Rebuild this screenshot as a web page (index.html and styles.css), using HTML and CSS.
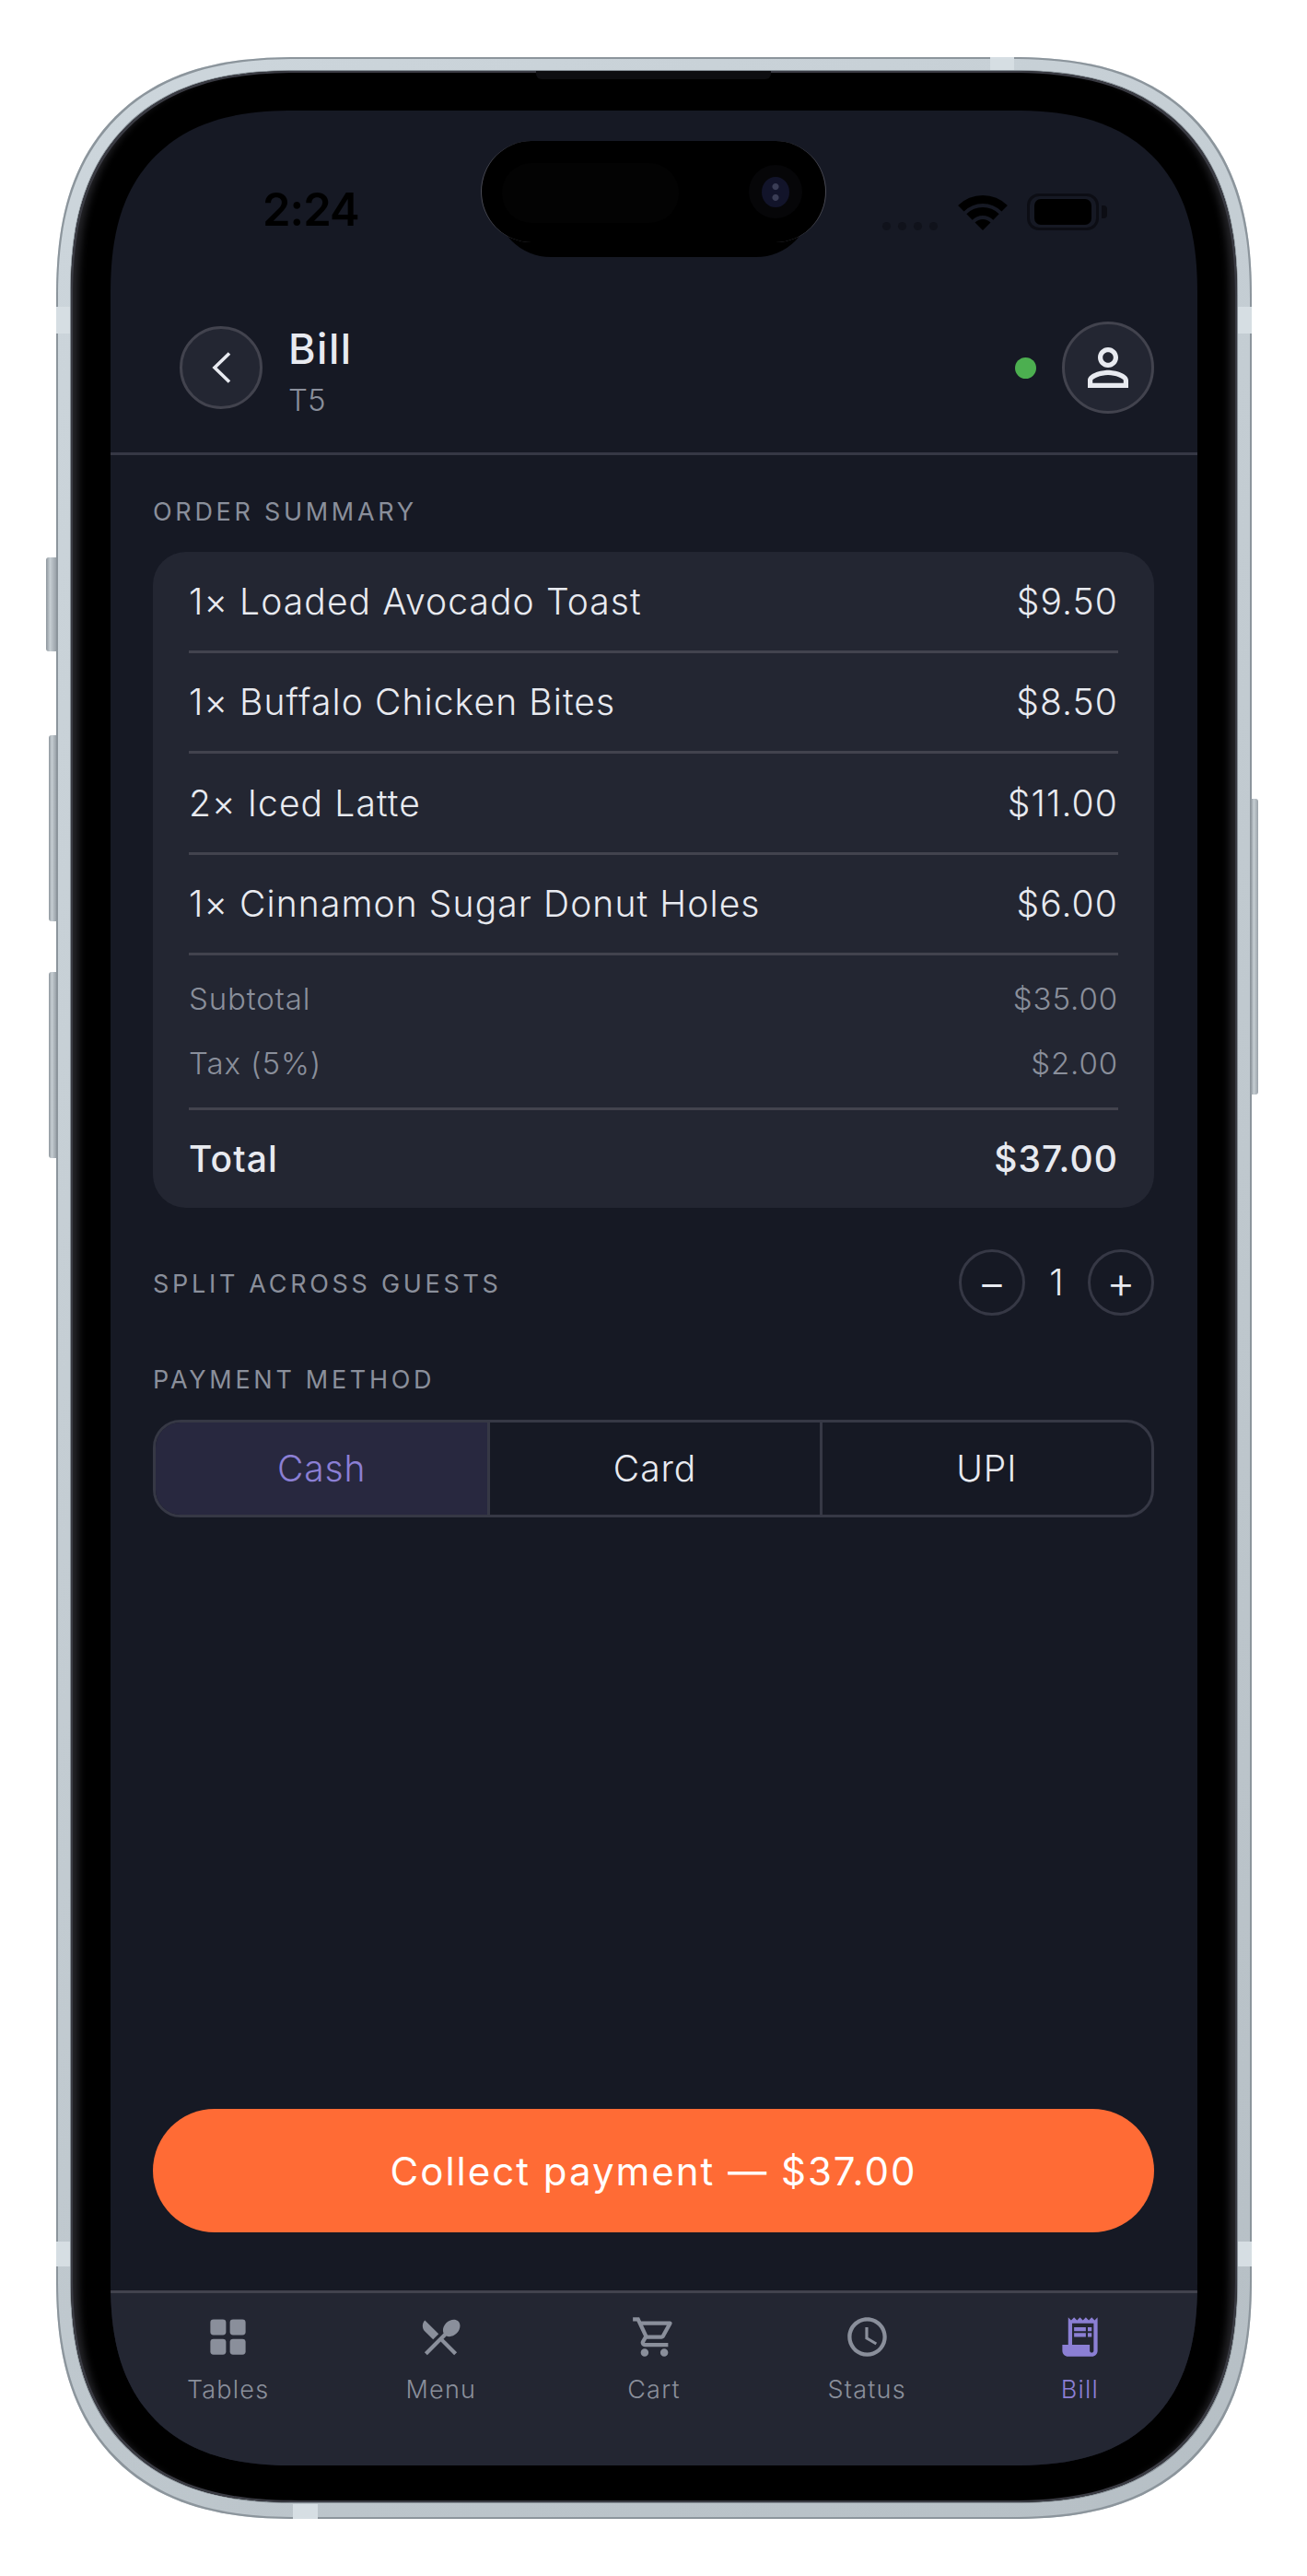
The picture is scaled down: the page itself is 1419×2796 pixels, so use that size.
FILE: index.html

```html
<!DOCTYPE html>
<html lang="en">
<head>
    <meta charset="UTF-8">
    <meta name="viewport" content="width=device-width, initial-scale=1.0">
    <title>Bill - T5</title>
    <link rel="stylesheet" href="styles.css">
</head>
<body>

    <div class="phone">
        <span class="side-btn side-mute"></span>
        <span class="side-btn side-up"></span>
        <span class="side-btn side-down"></span>
        <span class="side-btn side-power"></span>
        <span class="band band-top"></span>
        <span class="band band-bottom"></span>
        <span class="band band-left-a"></span>
        <span class="band band-left-b"></span>
        <span class="band band-right-a"></span>
        <span class="band band-right-b"></span>

        <div class="bezel">
            <span class="speaker"></span>

            <div class="screen">
                <div class="island-back"></div>
                <div class="island">
                    <span class="island-sensor"></span>
                    <span class="island-camera"><span class="island-lens"></span></span>
                </div>

                <div class="status-bar">
                    <span class="status-time">2:24</span>
                    <div class="status-icons">
                        <div class="signal"><i></i><i></i><i></i><i></i></div>
                        <svg class="wifi" viewBox="0 0 54 39">
                            <path d="M0.1 12.1A38 38 0 0 1 53.9 12.1L47.5 18.5A29 29 0 0 0 6.5 18.5Z"/>
                            <path d="M9.3 21.3A25 25 0 0 1 44.7 21.3L38.3 27.7A16 16 0 0 0 15.7 27.7Z"/>
                            <path d="M18.5 30.5A12 12 0 0 1 35.5 30.5L27 39Z"/>
                        </svg>
                        <div class="battery">
                            <div class="battery-body"><div class="battery-fill"></div></div>
                            <div class="battery-nub"></div>
                        </div>
                    </div>
                </div>

                <header class="header">
                    <button class="back-btn" aria-label="Back">
                        <svg viewBox="0 0 24 36" width="24" height="36">
                            <polyline points="21,2.5 5,18 21,33.5" fill="none" stroke="#e8eaf0" stroke-width="3.6"/>
                        </svg>
                    </button>
                    <div class="title-block">
                        <div class="title">Bill</div>
                        <div class="subtitle">T5</div>
                    </div>
                    <span class="online-dot"></span>
                    <button class="avatar-btn" aria-label="Profile">
                        <svg viewBox="0 0 24 24" width="66" height="66" fill="#e8eaf0">
                            <path d="M12 5.9c1.16 0 2.1.94 2.1 2.1s-.94 2.1-2.1 2.1S9.9 9.16 9.9 8s.94-2.1 2.1-2.1m0 9c2.97 0 6.1 1.46 6.1 2.1v1.1H5.9V17c0-.64 3.13-2.1 6.1-2.1M12 4C9.79 4 8 5.79 8 8s1.79 4 4 4 4-1.79 4-4-1.79-4-4-4zm0 9c-2.67 0-8 1.34-8 4v3h16v-3c0-2.66-5.33-4-8-4z"/>
                        </svg>
                    </button>
                </header>

                <main class="content">
                    <div class="section-label summary-label">ORDER SUMMARY</div>

                    <div class="card">
                        <div class="item-row"><span>1× Loaded Avocado Toast</span><span>$9.50</span></div>
                        <div class="item-row"><span>1× Buffalo Chicken Bites</span><span>$8.50</span></div>
                        <div class="item-row"><span>2× Iced Latte</span><span>$11.00</span></div>
                        <div class="item-row"><span>1× Cinnamon Sugar Donut Holes</span><span>$6.00</span></div>
                        <div class="sums">
                            <div class="sum-row"><span>Subtotal</span><span>$35.00</span></div>
                            <div class="sum-row"><span>Tax (5%)</span><span>$2.00</span></div>
                        </div>
                        <div class="total-row"><span>Total</span><span>$37.00</span></div>
                    </div>

                    <div class="split-row">
                        <div class="section-label split-label">SPLIT ACROSS GUESTS</div>
                        <div class="stepper">
                            <button class="step-btn">−</button>
                            <span class="step-count">1</span>
                            <button class="step-btn">+</button>
                        </div>
                    </div>

                    <div class="section-label method-label">PAYMENT METHOD</div>
                    <div class="segments">
                        <button class="segment active">Cash</button>
                        <button class="segment">Card</button>
                        <button class="segment">UPI</button>
                    </div>

                    <button class="collect-btn">Collect payment — $37.00</button>
                </main>

                <nav class="tabbar">
                    <div class="tab">
                        <svg viewBox="0 0 24 24">
                            <rect x="3" y="3" width="8" height="8" rx="1.6"/>
                            <rect x="13" y="3" width="8" height="8" rx="1.6"/>
                            <rect x="3" y="13" width="8" height="8" rx="1.6"/>
                            <rect x="13" y="13" width="8" height="8" rx="1.6"/>
                        </svg>
                        <span>Tables</span>
                    </div>
                    <div class="tab">
                        <svg viewBox="0 0 24 24">
                            <path d="m8.1 13.34 2.83-2.83L3.91 3.5c-1.56 1.56-1.56 4.09 0 5.66l4.19 4.18zm6.78-1.81c1.53.71 3.68.21 5.27-1.38 1.91-1.91 2.28-4.65.81-6.12-1.46-1.46-4.2-1.1-6.12.81-1.59 1.59-2.09 3.74-1.38 5.27L3.7 19.87l1.41 1.41L12 14.41l6.88 6.88 1.41-1.41L13.41 13l1.47-1.47z"/>
                        </svg>
                        <span>Menu</span>
                    </div>
                    <div class="tab">
                        <svg viewBox="0 0 24 24">
                            <path d="M15.55 13c.75 0 1.41-.41 1.75-1.03l3.58-6.49c.37-.66-.11-1.48-.87-1.48H5.21l-.94-2H1v2h2l3.6 7.59-1.35 2.44C4.52 15.37 5.48 17 7 17h12v-2H7l1.1-2h7.45zM6.16 6h12.15l-2.76 5H8.53L6.16 6zM7 18c-1.1 0-1.99.9-1.99 2S5.9 22 7 22s2-.9 2-2-.9-2-2-2zm10 0c-1.1 0-1.99.9-1.99 2s.89 2 1.99 2 2-.9 2-2-.9-2-2-2z"/>
                        </svg>
                        <span>Cart</span>
                    </div>
                    <div class="tab">
                        <svg viewBox="0 0 24 24">
                            <path d="M11.99 2C6.47 2 2 6.48 2 12s4.47 10 9.99 10C17.52 22 22 17.52 22 12S17.52 2 11.99 2zM12 20c-4.42 0-8-3.58-8-8s3.58-8 8-8 8 3.58 8 8-3.58 8-8 8z"/>
                            <path d="M12.5 7H11v6l5.25 3.15.75-1.23-4.5-2.67z"/>
                        </svg>
                        <span>Status</span>
                    </div>
                    <div class="tab active">
                        <svg viewBox="0 0 24 24">
                            <path d="M19.5 3.5 18 2l-1.5 1.5L15 2l-1.5 1.5L12 2l-1.5 1.5L9 2 7.5 3.5 6 2v14H3v3c0 1.66 1.34 3 3 3h12c1.66 0 3-1.34 3-3V2l-1.5 1.5zM19 19c0 .55-.45 1-1 1s-1-.45-1-1v-3H8V5h11v14z"/>
                            <path d="M9 7h6v2H9zm7 0h2v2h-2zm-7 3h6v2H9zm7 0h2v2h-2z"/>
                        </svg>
                        <span>Bill</span>
                    </div>
                </nav>
            </div>
        </div>
    </div>

</body>
</html>
```

FILE: styles.css

```css
* {
    box-sizing: border-box;
}
body {
    margin: 0;
    background: white;
    font-family: Inter, "Liberation Sans", sans-serif;
    font-optical-sizing: none;
}
button {
    font-family: inherit;
    padding: 0;
    cursor: pointer;
}

/* device frame */
.phone {
    position: relative;
    width: 1298px;
    height: 2672px;
    margin: 62px 0 0 61px;
    padding: 15px 16px 18px;
    border-radius: 262px;
    corner-shape: superellipse(1.3);
    background: linear-gradient(135deg, #cdd6dc, #c2cbd1 50%, #b6bfc5);
    box-shadow: inset 0 0 0 2px #8c959c;
}
.side-btn {
    position: absolute;
    background: linear-gradient(90deg, #8d959c, #c6ced3 40%, #9aa2a9);
    border-radius: 3px 0 0 3px;
}
.side-mute { left: -11px; top: 543px; width: 11px; height: 102px; }
.side-up { left: -8px; top: 736px; width: 8px; height: 202px; }
.side-down { left: -8px; top: 993px; width: 8px; height: 202px; }
.side-power {
    left: 1297px;
    top: 805px;
    width: 8px;
    height: 321px;
    border-radius: 0 3px 3px 0;
}
.band {
    position: absolute;
    background: #d6dee3;
}
.band-top { left: 1014px; top: 0; width: 26px; height: 15px; }
.band-bottom { left: 257px; bottom: 0; width: 27px; height: 16px; }
.band-left-a { left: 0; top: 271px; width: 16px; height: 29px; }
.band-left-b { left: 0; top: 2371px; width: 16px; height: 27px; }
.band-right-a { right: 0; top: 271px; width: 16px; height: 29px; }
.band-right-b { right: 0; top: 2371px; width: 16px; height: 27px; }

.bezel {
    position: relative;
    height: 100%;
    padding: 43px 43px 40px;
    background: black;
    border-radius: 246px;
    corner-shape: superellipse(1.3);
    box-shadow: 0 0 0 1px #858e95, inset 0 0 0 2px #3a3b43, inset 14px 0 8px -6px #26262a, inset -14px 0 8px -6px #26262a;
}
.speaker {
    position: absolute;
    left: 505px;
    top: 0;
    width: 255px;
    height: 9px;
    background: #0e0e11;
    border-radius: 0 0 6px 6px;
}

/* screen */
.screen {
    position: relative;
    display: flex;
    flex-direction: column;
    height: 100%;
    overflow: hidden;
    background: #161924;
    border-radius: 200px;
    corner-shape: superellipse(1.3);
    color: #e8eaf0;
}
.island {
    position: absolute;
    left: 402px;
    top: 33px;
    width: 375px;
    height: 110px;
    background: black;
    border-radius: 55px;
    border-left: 1px solid #4a4b55;
    border-right: 1px solid #4a4b55;
    z-index: 2;
}
.island-back {
    position: absolute;
    left: 418px;
    top: 33px;
    width: 343px;
    height: 126px;
    background: black;
    border-radius: 60px;
    z-index: 1;
}
.island-sensor {
    position: absolute;
    left: 22px;
    top: 24px;
    width: 192px;
    height: 65px;
    background: #030303;
    border-radius: 32px;
}
.island-camera {
    position: absolute;
    left: 290px;
    top: 26px;
    width: 58px;
    height: 58px;
    background: #060608;
    border-radius: 50%;
    display: flex;
    align-items: center;
    justify-content: center;
}
.island-lens {
    width: 30px;
    height: 33px;
    background:
        radial-gradient(circle at 50% 32%, #3a3d55 0 3px, transparent 4px),
        radial-gradient(circle at 50% 68%, #3a3d55 0 3px, transparent 4px),
        #12142a;
    border-radius: 50%;
}

.status-bar {
    display: flex;
    align-items: flex-start;
    height: 190px;
    padding: 90px 98px 0 165px;
    color: black;
}
.status-time {
    font-size: 49px;
    font-weight: 600;
    line-height: 36px;
    letter-spacing: -1px;
}
.status-icons {
    display: flex;
    align-items: flex-end;
    margin-left: auto;
}
.signal {
    display: flex;
    gap: 8px;
    margin-right: 22px;
}
.signal i {
    width: 9px;
    height: 9px;
    border-radius: 50%;
    background: #10121b;
}
.wifi {
    width: 54px;
    height: 39px;
    fill: black;
    margin-right: 21px;
}
.battery {
    display: flex;
    align-items: center;
}
.battery-body {
    width: 78px;
    height: 40px;
    padding: 3px 5px;
    border: 3px solid #0c0d14;
    border-radius: 13px;
}
.battery-fill {
    height: 100%;
    background: black;
    border-radius: 7px;
}
.battery-nub {
    width: 6px;
    height: 14px;
    margin-left: 3px;
    background: #0c0d14;
    border-radius: 0 4px 4px 0;
}

/* header */
.header {
    display: flex;
    align-items: center;
    height: 184px;
    padding: 0 47px 3px 75px;
    border-bottom: 3px solid #363845;
}
.back-btn {
    display: flex;
    align-items: center;
    justify-content: center;
    width: 90px;
    height: 90px;
    margin-right: 28px;
    background: #232632;
    border: 3px solid #42434e;
    border-radius: 50%;
}
.title-block {
    padding-top: 13px;
}
.title {
    font-size: 45px;
    font-weight: 550;
    line-height: 50px;
    letter-spacing: 1.5px;
    margin-bottom: 7px;
}
.subtitle {
    font-size: 33px;
    font-weight: 350;
    line-height: 46px;
    color: #8a8f9b;
}
.online-dot {
    width: 23px;
    height: 23px;
    margin: 0 28px 0 auto;
    background: #4caf50;
    border-radius: 50%;
}
.avatar-btn {
    display: flex;
    align-items: center;
    justify-content: center;
    width: 100px;
    height: 100px;
    background: #232632;
    border: 3px solid #42434e;
    border-radius: 50%;
}

/* bill content */
.content {
    flex: 1;
    display: flex;
    flex-direction: column;
    padding: 0 47px 63px 46px;
}
.section-label {
    font-size: 27px;
    line-height: 36px;
    letter-spacing: 3.7px;
    color: #8a8f9b;
}
.summary-label {
    margin: 44px 0 25px;
}
.split-label {
    padding-top: 4px;
}
.card {
    padding: 0 39px;
    background: #232632;
    border-radius: 36px;
}
.item-row {
    display: flex;
    justify-content: space-between;
    align-items: center;
    height: 109.5px;
    border-bottom: 3px solid #42434e;
    font-size: 39px;
    font-weight: 350;
    letter-spacing: 1.1px;
}
.sums {
    padding: 11.5px 0 13px;
    border-bottom: 3px solid #42434e;
}
.sum-row {
    display: flex;
    justify-content: space-between;
    align-items: center;
    height: 70px;
    font-size: 33px;
    font-weight: 350;
    letter-spacing: 0.9px;
    color: #8a8f9b;
}
.total-row {
    display: flex;
    justify-content: space-between;
    align-items: center;
    height: 106px;
    font-size: 39px;
    font-weight: 480;
    letter-spacing: 1.1px;
}

.split-row {
    display: flex;
    justify-content: space-between;
    align-items: center;
    margin-top: 45px;
}
.stepper {
    display: flex;
    align-items: center;
}
.step-btn {
    width: 72px;
    height: 72px;
    background: transparent;
    border: 3px solid #363845;
    border-radius: 50%;
    color: #e8eaf0;
    font-size: 48px;
    font-weight: 300;
}
.step-count {
    width: 68px;
    text-align: center;
    font-size: 39px;
    font-weight: 350;
}
.method-label {
    margin: 52px 0 25px;
}
.segments {
    display: grid;
    grid-template-columns: repeat(3, 1fr);
    height: 106px;
    border: 3px solid #363845;
    border-radius: 30px;
    overflow: hidden;
}
.segment {
    background: transparent;
    border: none;
    border-left: 3px solid #363845;
    color: #e8eaf0;
    font-size: 39px;
    font-weight: 350;
    letter-spacing: 0.9px;
}
.segment:first-child {
    border-left: none;
}
.segment.active {
    background: #28283f;
    color: #8b7fd4;
}
.collect-btn {
    height: 134px;
    margin-top: auto;
    background: #ff6b35;
    border: none;
    border-radius: 67px;
    color: white;
    font-size: 42px;
    font-weight: 430;
    letter-spacing: 2px;
}

/* bottom tabs */
.tabbar {
    display: flex;
    height: 190px;
    padding: 21.5px 12px 0;
    background: #232632;
    border-top: 3px solid #42434e;
}
.tab {
    flex: 1;
    display: flex;
    flex-direction: column;
    align-items: center;
    gap: 14.5px;
    font-size: 27px;
    font-weight: 350;
    line-height: 36px;
    letter-spacing: 1.2px;
    color: #8a8f9b;
}
.tab svg {
    width: 51px;
    height: 51px;
    fill: currentColor;
}
.tab.active {
    color: #8b7fd4;
}
```
